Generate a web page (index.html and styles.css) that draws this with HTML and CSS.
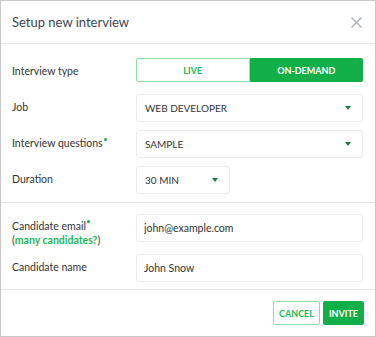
FILE: index.html
```html
<!DOCTYPE html>
<html lang="en">
<head>
    <meta charset="UTF-8">
    <title>Setup new interview</title>
    <link rel="stylesheet" href="styles.css">
</head>
<body>
    <div class="modal">
        <header class="modal-header">
            <h1>Setup new interview</h1>
            <button class="close-btn" aria-label="Close">
                <svg width="11" height="11" viewBox="0 0 11 11"><path d="M0.5 0.5L10.5 10.5M10.5 0.5L0.5 10.5" stroke="#a9b0b5" stroke-width="1.3"/></svg>
            </button>
        </header>
        <section class="section section-top">
            <div class="row">
                <label>Interview type</label>
                <div class="toggle">
                    <button class="toggle-opt">LIVE</button>
                    <button class="toggle-opt active">ON-DEMAND</button>
                </div>
            </div>
            <div class="row">
                <label>Job</label>
                <div class="select">
                    <span>WEB DEVELOPER</span>
                    <span class="caret"></span>
                </div>
            </div>
            <div class="row">
                <label>Interview questions<span class="req"></span></label>
                <div class="select">
                    <span>SAMPLE</span>
                    <span class="caret"></span>
                </div>
            </div>
            <div class="row">
                <label>Duration</label>
                <div class="select select-short">
                    <span>30 MIN</span>
                    <span class="caret"></span>
                </div>
            </div>
        </section>
        <section class="section section-bottom">
            <div class="row row-top">
                <label class="label-stack">Candidate email<span class="req"></span><br>(<a href="#">many candidates?</a>)</label>
                <input class="input" type="text" value="john@example.com">
            </div>
            <div class="row">
                <label>Candidate name</label>
                <input class="input" type="text" value="John Snow">
            </div>
        </section>
        <footer class="modal-footer">
            <button class="btn btn-outline">CANCEL</button>
            <button class="btn btn-primary">INVITE</button>
        </footer>
    </div>
</body>
</html>
```
FILE: styles.css
```css
* {
    box-sizing: border-box;
}
body {
    margin: 0;
    font-family: Lato, 'Open Sans', sans-serif;
    color: #333;
    background: #fff;
}
.modal {
    width: 376px;
    height: 337px;
    border: 1px solid #c8c8c8;
    display: flex;
    flex-direction: column;
}
.modal-header {
    height: 43px;
    display: flex;
    align-items: center;
    justify-content: space-between;
    padding: 0 13px 0 11px;
    border-bottom: 1px solid #e6e6e6;
}
.modal-header h1 {
    margin: 0;
    font-size: 13px;
    font-weight: 400;
    color: #3a4650;
}
.close-btn {
    border: none;
    background: none;
    padding: 0;
    display: flex;
    cursor: pointer;
}
.section {
    display: flex;
    flex-direction: column;
    padding: 0 11px 0 11px;
    border-bottom: 1px solid #e6e6e6;
}
.section-top {
    padding-top: 14px;
    padding-bottom: 8px;
    gap: 8px;
}
.section-bottom {
    padding-top: 11px;
    padding-bottom: 7px;
    gap: 12px;
}
.row {
    display: grid;
    grid-template-columns: 124px 227px;
    align-items: center;
}
.row-top {
    align-items: start;
}
.row label {
    font-size: 10.5px;
    color: #333;
    margin-top: -2px;
}
.label-stack {
    line-height: 14px;
    padding-top: 7px;
    margin-bottom: -14px;
}
.label-stack a {
    color: #1db954;
    font-weight: 700;
    text-decoration: none;
}
.req {
    display: inline-block;
    width: 3px;
    height: 3px;
    border-radius: 50%;
    background: #12b047;
    vertical-align: top;
    margin-left: 1px;
    margin-top: 1px;
}
.toggle {
    display: flex;
    height: 24px;
    margin-bottom: 4px;
}
.toggle-opt {
    flex: 1;
    font-family: inherit;
    font-size: 9px;
    font-weight: 700;
    border: 1px solid #8fdea5;
    background: #fff;
    color: #1db954;
    border-radius: 2px 0 0 2px;
    padding: 0;
}
.toggle-opt.active {
    background: #11af48;
    border-color: #11af48;
    color: #fff;
    border-radius: 0 2px 2px 0;
}
.select {
    height: 28px;
    display: flex;
    align-items: center;
    justify-content: space-between;
    padding: 0 11px 0 8px;
    border: 1px solid #ededed;
    border-radius: 3px;
    font-size: 10px;
    color: #333;
}
.select-short {
    width: 94px;
}
.caret {
    width: 0;
    height: 0;
    border-left: 3.5px solid transparent;
    border-right: 3.5px solid transparent;
    border-top: 4px solid #1b7d3c;
}
.input {
    height: 28px;
    border: 1px solid #ededed;
    border-radius: 3px;
    padding: 0 7px;
    font-family: inherit;
    font-size: 10.5px;
    color: #333;
    outline: none;
}
.modal-footer {
    flex: 1;
    display: flex;
    justify-content: flex-end;
    align-items: center;
    gap: 3px;
    padding: 0 11px 0 0;
}
.btn {
    height: 24px;
    font-family: inherit;
    font-size: 9px;
    font-weight: 700;
    border-radius: 2px;
    padding: 0;
    cursor: pointer;
}
.btn-outline {
    width: 47px;
    background: #fff;
    border: 1px solid #8fdea5;
    color: #1db954;
}
.btn-primary {
    width: 41px;
    background: #11af48;
    border: 1px solid #11af48;
    color: #fff;
}
```
